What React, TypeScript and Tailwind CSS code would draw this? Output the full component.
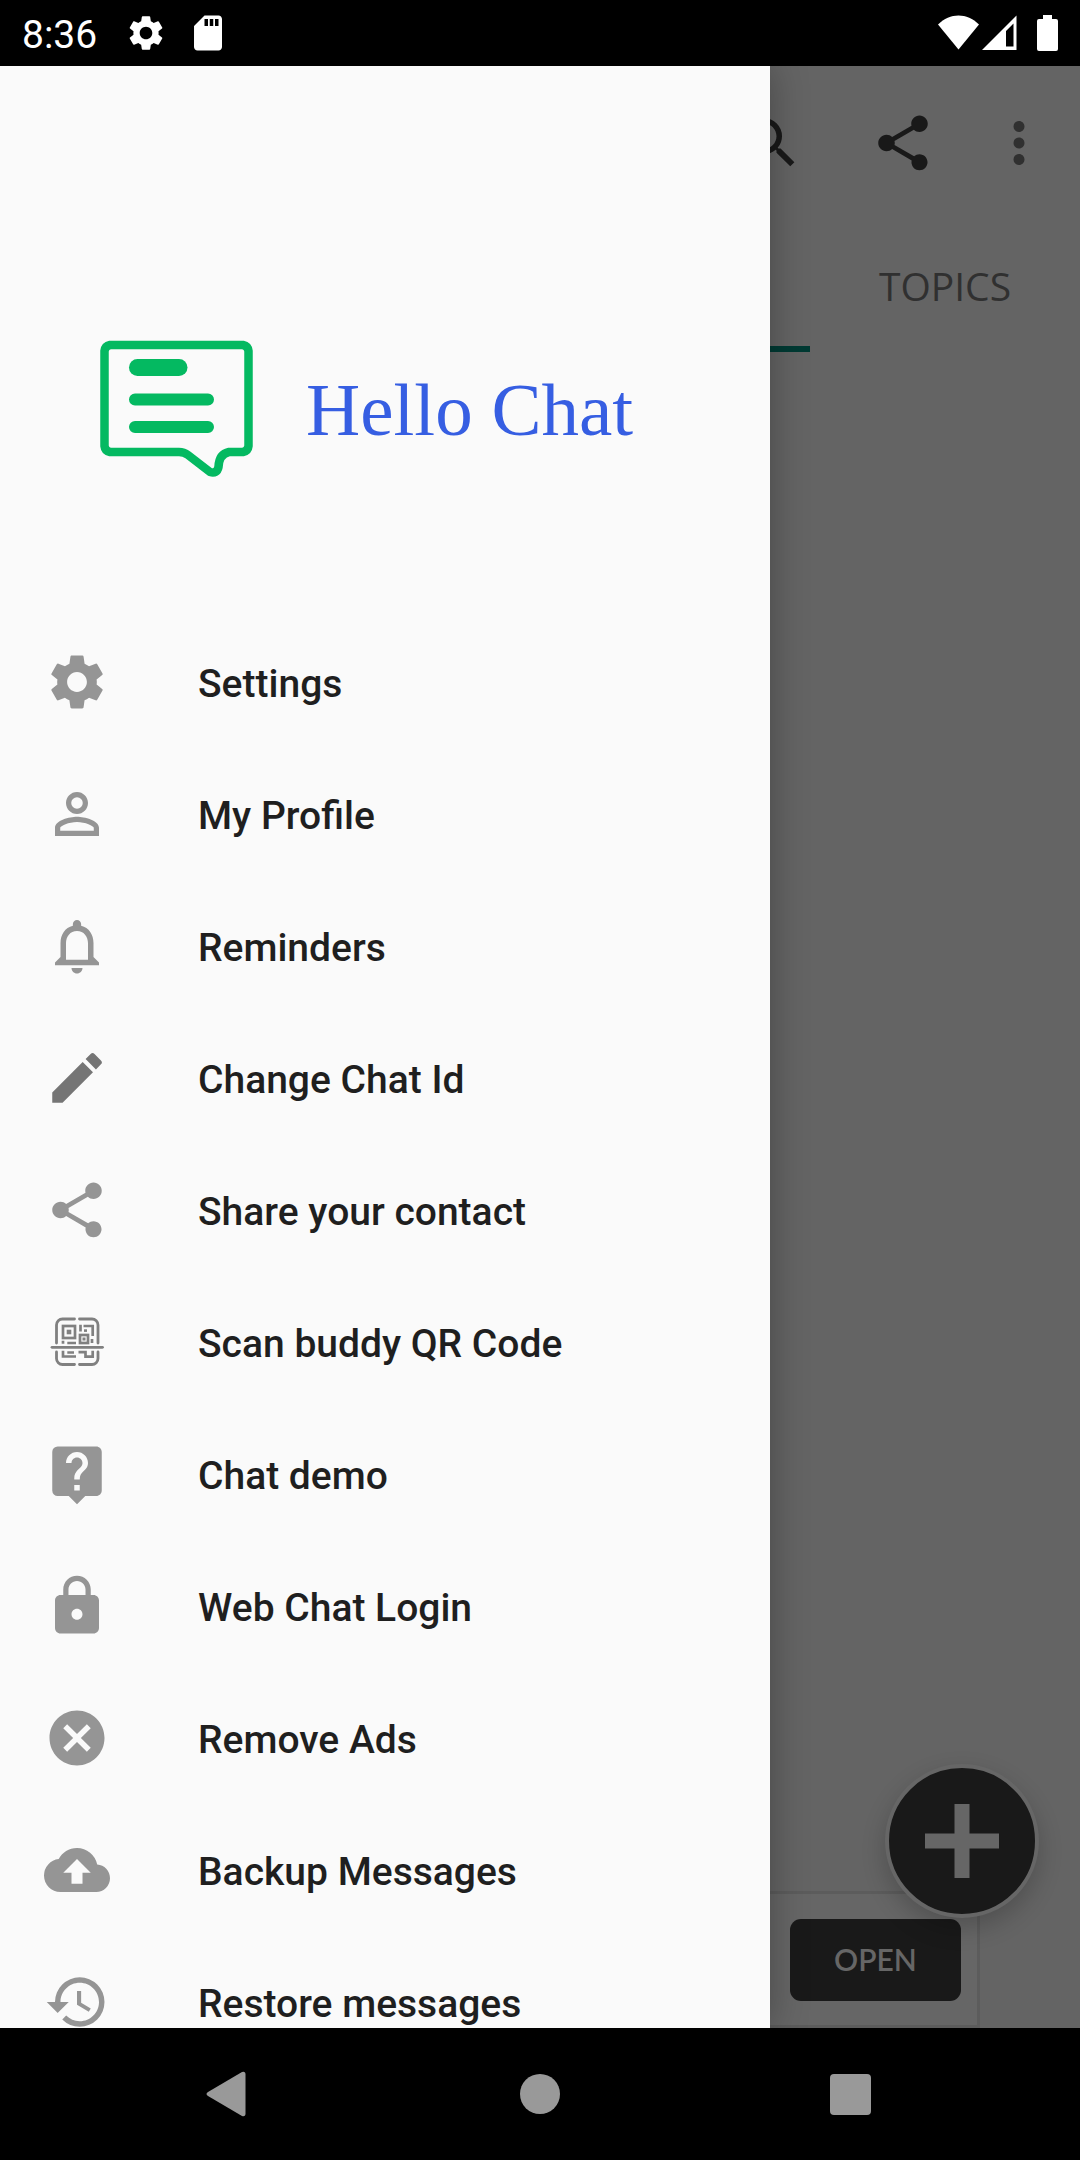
import type { ReactNode } from 'react';
import {
  MdCancel,
  MdCloudUpload,
  MdEdit,
  MdHistory,
  MdLiveHelp,
  MdLock,
  MdMoreVert,
  MdNotificationsNone,
  MdPersonOutline,
  MdSdCard,
  MdSearch,
  MdSettings,
  MdShare,
} from 'react-icons/md';

function QrScanIcon() {
  return (
    <svg viewBox="0 0 66 66" className="h-full w-full" fill="none" stroke="currentColor">
      <g strokeWidth="2.8" strokeLinecap="round">
        <path d="M12.5 34V16a6 6 0 0 1 6-6H30.5M35.5 10H48a6 6 0 0 1 6 6V34" />
        <path d="M12.5 43V49.5a6 6 0 0 0 6 6H30.5M35.5 55.5H48a6 6 0 0 0 6-6V43" />
        <path d="M8 38.3H58.5" />
      </g>
      <g strokeWidth="2.7">
        <rect x="19" y="17" width="12" height="12" />
        <rect x="36" y="26" width="8" height="8" />
        <path d="M36.5 15.7V22.5M39.5 17H48.7V27M19 31.7V34.7M23.3 34H32M48 30V34" />
        <path d="M19 41.7V47.5H32M23.3 43.5H30M34.5 43.2H41.5V47.7H48.7V41.7" />
      </g>
      <g fill="currentColor" stroke="none">
        <rect x="22.7" y="20.7" width="4.6" height="4.6" />
        <rect x="40" y="20.3" width="3" height="2.6" />
        <rect x="38.5" y="28.5" width="3" height="3" />
      </g>
    </svg>
  );
}

function ChatLogo() {
  return (
    <svg viewBox="0 0 154 138" className="h-[138px] w-[154px]" fill="none" stroke="#04b961">
      <path
        strokeWidth="8.5"
        strokeLinejoin="round"
        d="M10 5H143Q148 6 148.500 11V106Q148 111 143 112H129Q119 114 118.500 127Q117 134 110 132L88 115Q84 112 79 112H10Q5 111 4.500 106V11Q5 6 10 5Z"
      />
      <path strokeWidth="17" strokeLinecap="round" d="M37.5 27.5H79" />
      <path strokeWidth="12" strokeLinecap="round" d="M35 59.5H108M35 87H108" />
    </svg>
  );
}

interface MenuItem {
  label: string;
  icon: ReactNode;
  color?: string;
}

const menuItems: MenuItem[] = [
  { label: 'Settings', icon: <MdSettings size={66} /> },
  { label: 'My Profile', icon: <MdPersonOutline size={66} /> },
  { label: 'Reminders', icon: <MdNotificationsNone size={66} /> },
  { label: 'Change Chat Id', icon: <MdEdit size={66} />, color: 'text-[#757575]' },
  { label: 'Share your contact', icon: <MdShare size={66} /> },
  { label: 'Scan buddy QR Code', icon: <QrScanIcon />, color: 'text-[#808080]' },
  { label: 'Chat demo', icon: <MdLiveHelp size={66} /> },
  { label: 'Web Chat Login', icon: <MdLock size={66} /> },
  { label: 'Remove Ads', icon: <MdCancel size={66} /> },
  { label: 'Backup Messages', icon: <MdCloudUpload size={66} /> },
  { label: 'Restore messages', icon: <MdHistory size={66} /> },
];

function StatusBar() {
  return (
    <header className="flex h-[66px] shrink-0 items-center justify-between bg-black px-[22px] text-white">
      <div className="flex items-center gap-5">
        <span className="mr-2 pt-1 text-[39px] leading-none">8:36</span>
        <MdSettings size={42} />
        <MdSdCard size={42} />
      </div>
      <div className="flex items-center">
        <svg viewBox="0 0 42 36" className="mr-0.5 h-9 w-[42px]" fill="currentColor">
          <path d="M0 9.5C12-2.500 29-2.500 41 9.5L20.5 34.5Z" />
        </svg>
        <svg viewBox="0 0 36 36" className="mr-[19px] h-9 w-9" fill="currentColor">
          <path fillRule="evenodd" d="M0 35L34.5 0.500V35ZM24 16V31.500H31.500V8.500Z" />
        </svg>
        <svg viewBox="0 0 21 36" className="h-9 w-[21px]" fill="currentColor">
          <path d="M6 0H15V4H19a2 2 0 0 1 2 2V34a2 2 0 0 1-2 2H2a2 2 0 0 1-2-2V6a2 2 0 0 1 2-2H6Z" />
        </svg>
      </div>
    </header>
  );
}

// Chat screen behind the drawer, already dimmed by the scrim
function ChatScreen() {
  return (
    <main className="flex h-full flex-col bg-[#646464]">
      <div className="flex h-[154px] items-center justify-end pr-[11px] text-[#191919]">
        <button aria-label="Search" className="flex w-[132px] justify-center">
          <MdSearch size={66} />
        </button>
        <button aria-label="Share" className="flex w-[132px] justify-center">
          <MdShare size={66} />
        </button>
        <button aria-label="More options" className="flex w-[100px] justify-center text-[#303030]">
          <MdMoreVert size={66} />
        </button>
      </div>
      <div className="flex h-[132px] justify-end">
        <div className="w-1/4 border-b-[6px] border-[#003a33]" />
        <button className="w-1/4 font-['Open_Sans',sans-serif] text-[39px] text-[#303030]">TOPICS</button>
      </div>

      <div className="mx-auto mt-auto flex h-[137px] w-[880px] items-center justify-end border-[3px] border-[#5c5c5c] bg-[#666] pr-4">
        <button className="h-[82px] w-[171px] rounded-[11px] bg-[#191919] font-[Lato,sans-serif] text-[30px] font-semibold text-[#666]">
          OPEN
        </button>
      </div>

      <button
        aria-label="New chat"
        className="absolute right-[41px] bottom-[110px] flex h-[154px] w-[154px] items-center justify-center rounded-full border-4 border-[#666] bg-[#191919] shadow-[0_10px_24px_rgba(0,0,0,0.2)]"
      >
        <svg viewBox="0 0 74 74" className="h-[74px] w-[74px]" stroke="#666" strokeWidth="15">
          <path d="M37 0V74M0 37H74" />
        </svg>
      </button>
    </main>
  );
}

function Drawer() {
  return (
    <aside className="absolute inset-y-0 left-0 w-[770px] overflow-hidden bg-[#fafafa] shadow-[0_0_36px_rgba(0,0,0,0.3)]">
      <div className="flex h-[550px] items-start pt-[274px] pl-[100px]">
        <div className="flex items-center gap-[52px]">
          <ChatLogo />
          <span className="font-['Liberation_Serif',serif] text-[75px] leading-none text-[#365ee2]">Hello Chat</span>
        </div>
      </div>
      <nav>
        {menuItems.map(({ label, icon, color = 'text-[#959595]' }) => (
          <a
            key={label}
            href="#"
            className="flex h-[132px] items-center gap-[88px] pl-11 text-[39px] font-medium text-[#1f1f1f]"
          >
            <span className={`h-[66px] w-[66px] ${color}`}>{icon}</span>
            <span className="pt-1">{label}</span>
          </a>
        ))}
      </nav>
    </aside>
  );
}

function NavigationBar() {
  return (
    <footer className="flex h-[132px] shrink-0 items-center bg-black px-[74px]">
      <button aria-label="Back" className="flex flex-1 justify-center">
        <svg viewBox="0 0 46 46" className="h-[46px] w-[46px]" fill="#999">
          <path d="M2 21L36 1Q39.5 0 39.5 3.5V42.5Q39.5 46 36 45L2 25Q-1 23 2 21Z" />
        </svg>
      </button>
      <button aria-label="Home" className="flex flex-1 justify-center">
        <span className="h-10 w-10 rounded-full bg-[#999]" />
      </button>
      <button aria-label="Recent apps" className="flex flex-1 justify-center">
        <span className="h-[41px] w-[41px] rounded bg-[#999]" />
      </button>
    </footer>
  );
}

export default function App() {
  return (
    <div className="flex h-screen flex-col overflow-hidden font-[Roboto,sans-serif]">
      <StatusBar />
      <div className="relative min-h-0 flex-1 overflow-hidden">
        <ChatScreen />
        <Drawer />
      </div>
      <NavigationBar />
    </div>
  );
}
